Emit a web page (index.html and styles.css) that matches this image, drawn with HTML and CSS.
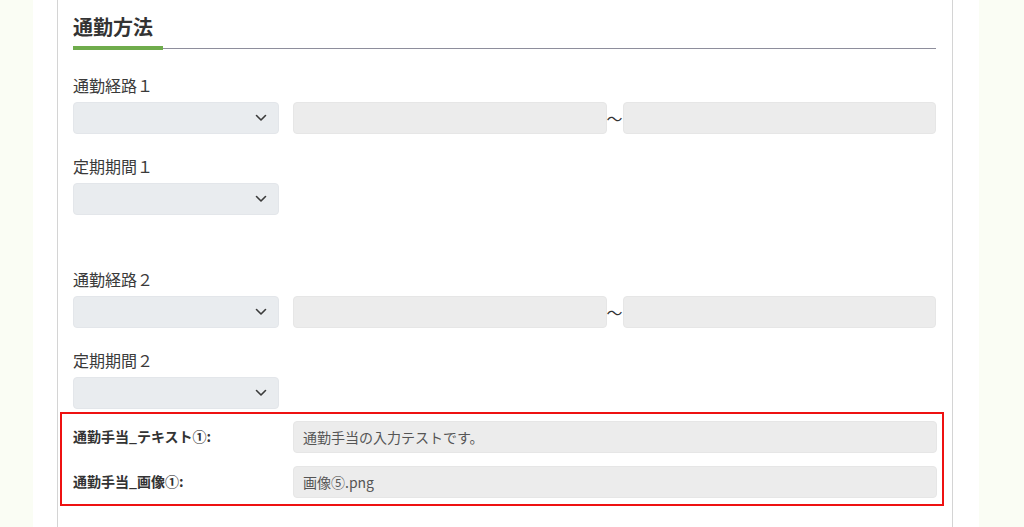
FILE: index.html
```html
<!doctype html>
<html lang="ja">
    <head>
        <meta charset="utf-8">
        <title>通勤方法</title>
        <link rel="stylesheet" href="styles.css">
    </head>
    <body>
        <div class="page">
            <div class="card">
                <h2 class="title">通勤方法</h2>
                <div class="title-line"><span class="title-mark"></span><span class="title-rule"></span></div>

                <div class="group first">
                    <div class="label">通勤経路１</div>
                    <div class="route">
                        <div class="select"><svg width="12" height="8" viewBox="0 0 12 8"><path d="M1.5 1.5 6 6l4.5-4.5" fill="none" stroke="#3b3b3b" stroke-width="1.6" stroke-linecap="round" stroke-linejoin="round"/></svg></div>
                        <div class="input"></div>
                        <span class="tilde">～</span>
                        <div class="input"></div>
                    </div>
                </div>
                <div class="group">
                    <div class="label">定期期間１</div>
                    <div class="select"><svg width="12" height="8" viewBox="0 0 12 8"><path d="M1.5 1.5 6 6l4.5-4.5" fill="none" stroke="#3b3b3b" stroke-width="1.6" stroke-linecap="round" stroke-linejoin="round"/></svg></div>
                </div>

                <div class="group spaced">
                    <div class="label">通勤経路２</div>
                    <div class="route">
                        <div class="select"><svg width="12" height="8" viewBox="0 0 12 8"><path d="M1.5 1.5 6 6l4.5-4.5" fill="none" stroke="#3b3b3b" stroke-width="1.6" stroke-linecap="round" stroke-linejoin="round"/></svg></div>
                        <div class="input"></div>
                        <span class="tilde">～</span>
                        <div class="input"></div>
                    </div>
                </div>
                <div class="group">
                    <div class="label">定期期間２</div>
                    <div class="select"><svg width="12" height="8" viewBox="0 0 12 8"><path d="M1.5 1.5 6 6l4.5-4.5" fill="none" stroke="#3b3b3b" stroke-width="1.6" stroke-linecap="round" stroke-linejoin="round"/></svg></div>
                </div>

                <div class="allowance">
                    <div class="row">
                        <div class="row-label">通勤手当_テキスト①:</div>
                        <div class="input value">通勤手当の入力テストです。</div>
                    </div>
                    <div class="row">
                        <div class="row-label">通勤手当_画像①:</div>
                        <div class="input value">画像⑤.png</div>
                    </div>
                </div>
            </div>
        </div>
    </body>
</html>
```

FILE: styles.css
```css
body{margin:0;background:#fafdf4;font-family:"Noto Sans CJK JP","Noto Sans",sans-serif;color:#333;}
.page{width:946px;margin-left:33px;padding-left:24px;box-sizing:border-box;padding-right:26px;background:#fff;min-height:527px;}
.card{border-left:1px solid #d4d4d4;border-right:1px solid #d4d4d4;padding:13px 16px 20px 15px;min-height:527px;box-sizing:border-box;}
.title{margin:0;font-size:20px;line-height:28px;font-weight:bold;color:#333;padding-bottom:5px;}
.title-line{display:flex;align-items:center;height:4px;}
.title-mark{width:90px;height:4px;background:#6fac4c;}
.title-rule{flex:1;height:1px;background:#8e8e9c;}

.group{margin-top:20px;}
.group.first{margin-top:23px;}
.group.spaced{margin-top:52px;}
.label{font-size:16px;line-height:24px;margin-bottom:5px;color:#3a3a3a;}

.route{display:flex;align-items:center;}
.select{width:206px;height:32px;box-sizing:border-box;background:#e9ecef;border:1px solid #e3e6ea;border-radius:4px;display:flex;align-items:center;justify-content:flex-end;padding-right:11px;}
.route .select{margin-right:14px;}
.input{flex:1;height:32px;box-sizing:border-box;background:#ececec;border:1px solid #e6e6e6;border-radius:4px;}
.tilde{width:16px;font-size:16px;line-height:32px;text-align:center;color:#333;}

.allowance{margin:3px -8px 0 -13px;border:2px solid #ee1111;padding:7px 5px 6px 11px;}
.row{display:flex;align-items:center;}
.row + .row{margin-top:13px;}
.row-label{width:220px;font-size:14px;line-height:20px;font-weight:bold;color:#333;margin-top:-3px;}
.value{font-size:14px;line-height:30px;color:#555;padding-left:9px;}
```
